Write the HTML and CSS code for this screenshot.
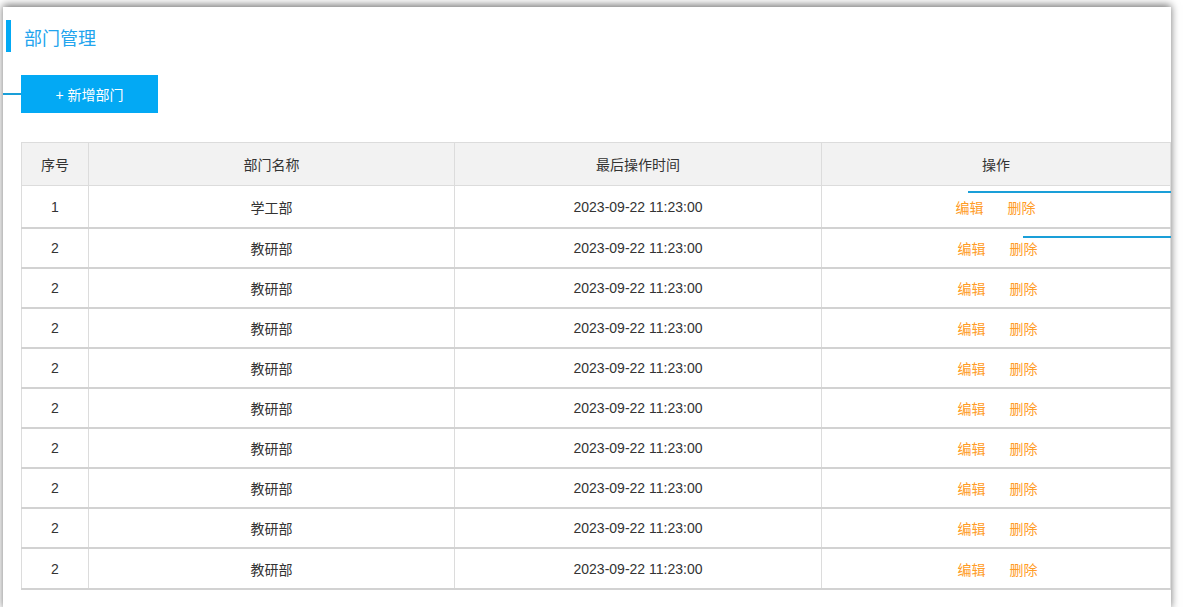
FILE: index.html
```html
<!DOCTYPE html>
<html lang="zh-CN">
  <head>
    <meta charset="UTF-8" />
    <meta name="viewport" content="width=device-width, initial-scale=1.0" />
    <title>部门管理</title>
    <link rel="stylesheet" href="styles.css">
  </head>
  <body>
    <div class="panel">
      <h2 class="page-title">部门管理</h2>
      <button class="add-btn">+ 新增部门</button>
      <table class="dept-table">
        <thead>
          <tr>
            <th class="col-no">序号</th>
            <th class="col-name">部门名称</th>
            <th class="col-time">最后操作时间</th>
            <th>操作</th>
          </tr>
        </thead>
        <tbody>
          <tr class="first">
            <td>1</td>
            <td>学工部</td>
            <td>2023-09-22 11:23:00</td>
            <td class="ops ops-first"><a>编辑</a><a>删除</a></td>
          </tr>
          <tr><td>2</td><td>教研部</td><td>2023-09-22 11:23:00</td><td class="ops"><a>编辑</a><a>删除</a></td></tr>
          <tr><td>2</td><td>教研部</td><td>2023-09-22 11:23:00</td><td class="ops"><a>编辑</a><a>删除</a></td></tr>
          <tr><td>2</td><td>教研部</td><td>2023-09-22 11:23:00</td><td class="ops"><a>编辑</a><a>删除</a></td></tr>
          <tr><td>2</td><td>教研部</td><td>2023-09-22 11:23:00</td><td class="ops"><a>编辑</a><a>删除</a></td></tr>
          <tr><td>2</td><td>教研部</td><td>2023-09-22 11:23:00</td><td class="ops"><a>编辑</a><a>删除</a></td></tr>
          <tr><td>2</td><td>教研部</td><td>2023-09-22 11:23:00</td><td class="ops"><a>编辑</a><a>删除</a></td></tr>
          <tr><td>2</td><td>教研部</td><td>2023-09-22 11:23:00</td><td class="ops"><a>编辑</a><a>删除</a></td></tr>
          <tr><td>2</td><td>教研部</td><td>2023-09-22 11:23:00</td><td class="ops"><a>编辑</a><a>删除</a></td></tr>
          <tr class="last"><td>2</td><td>教研部</td><td>2023-09-22 11:23:00</td><td class="ops"><a>编辑</a><a>删除</a></td></tr>
        </tbody>
      </table>
      <!-- 装饰线 -->
      <span class="line line-btn"></span>
      <span class="line line-row1"></span>
      <span class="line line-row2"></span>
    </div>
  </body>
</html>
```

FILE: styles.css
```css
/* 基本样式 */
body {
  margin: 0;
  padding: 0;
  background-color: #fff;
  font-family: "Liberation Sans", "Noto Sans CJK SC", sans-serif;
  color: #333;
  overflow: hidden;
}

.panel {
  position: relative;
  margin: 7px 12px 0 3px;
  padding-top: 13px;
  height: 590px;
  background-color: #fff;
  box-shadow: 0 -2px 8px rgba(0, 0, 0, 0.55);
}

/* 标题 */
.page-title {
  margin: 0 0 0 3px;
  height: 26px;
  padding-top: 6px;
  line-height: 26px;
  padding-left: 13px;
  border-left: 5px solid #03a9f4;
  font-size: 18px;
  font-weight: normal;
  color: #22a4ee;
}

/* 新增按钮 */
.add-btn {
  display: block;
  margin: 23px 0 0 18px;
  width: 137px;
  height: 38px;
  border: none;
  background-color: #03a9f4;
  color: #fff;
  font-family: inherit;
  font-size: 14px;
  cursor: pointer;
}

/* 表格 */
.dept-table {
  margin: 29px 0 0 18px;
  width: 1150px;
  border-collapse: collapse;
  font-size: 14px;
  text-align: center;
}

.dept-table th,
.dept-table td {
  border: 1px solid #dcdcdc;
  padding: 0;
}

.dept-table th {
  height: 42px;
  background-color: #f2f2f2;
  font-weight: normal;
  color: #333;
}

.dept-table tbody tr {
  border-bottom: 2px solid #d2d2d2;
}

.dept-table td {
  height: 38px;
}

.dept-table tr.first td {
  height: 41px;
}

.dept-table tr.last td {
  height: 39px;
}

.col-no {
  width: 66px;
}

.col-name {
  width: 365px;
}

.col-time {
  width: 366px;
}

.dept-table td.ops {
  padding-left: 3px;
}

.ops a {
  color: #ff9c26;
  cursor: pointer;
  margin: 0 12px;
}

.dept-table td.ops-first {
  padding-left: 0;
  padding-right: 1px;
}

/* 装饰线 */
.line {
  position: absolute;
  height: 2px;
  background-color: #1a9fd8;
}

.line-btn {
  top: 86px;
  left: 0;
  width: 18px;
}

.line-row1 {
  top: 184px;
  left: 965px;
  right: 0;
}

.line-row2 {
  top: 229px;
  left: 1020px;
  right: 0;
}
```
